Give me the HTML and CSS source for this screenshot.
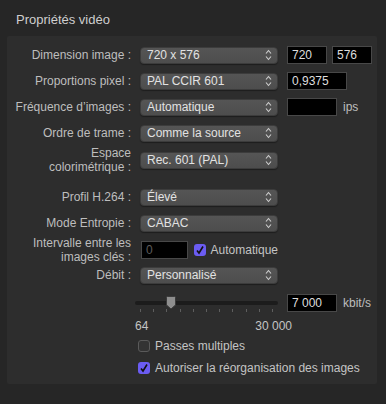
FILE: index.html
```html
<!DOCTYPE html>
<html lang="fr">
<head>
  <meta charset="UTF-8">
  <title>Propriétés vidéo</title>
  <link rel="stylesheet" href="styles.css">
</head>
<body>
  <div class="titre">Propriétés vidéo</div>

  <div class="panneau">
    <div class="ligne">
      <div class="lbl">Dimension image :</div>
      <div class="popup">720 x 576<svg class="chev" viewBox="0 0 7 12"><path d="M1 4.5 L3.5 1.5 L6 4.5 M1 7.5 L3.5 10.5 L6 7.5"/></svg></div>
      <div class="extra"><span class="champ l40">720</span><span class="champ l40">576</span></div>
    </div>

    <div class="ligne">
      <div class="lbl">Proportions pixel :</div>
      <div class="popup">PAL CCIR 601<svg class="chev" viewBox="0 0 7 12"><path d="M1 4.5 L3.5 1.5 L6 4.5 M1 7.5 L3.5 10.5 L6 7.5"/></svg></div>
      <div class="extra"><span class="champ l60">0,9375</span></div>
    </div>

    <div class="ligne">
      <div class="lbl">Fréquence d’images :</div>
      <div class="popup">Automatique<svg class="chev" viewBox="0 0 7 12"><path d="M1 4.5 L3.5 1.5 L6 4.5 M1 7.5 L3.5 10.5 L6 7.5"/></svg></div>
      <div class="extra"><span class="champ l50"></span><span class="unite">ips</span></div>
    </div>

    <div class="ligne">
      <div class="lbl">Ordre de trame :</div>
      <div class="popup">Comme la source<svg class="chev" viewBox="0 0 7 12"><path d="M1 4.5 L3.5 1.5 L6 4.5 M1 7.5 L3.5 10.5 L6 7.5"/></svg></div>
    </div>

    <div class="ligne">
      <div class="lbl deux">Espace<br>colorimétrique :</div>
      <div class="popup">Rec. 601 (PAL)<svg class="chev" viewBox="0 0 7 12"><path d="M1 4.5 L3.5 1.5 L6 4.5 M1 7.5 L3.5 10.5 L6 7.5"/></svg></div>
    </div>

    <div class="ligne espace-avant">
      <div class="lbl">Profil H.264 :</div>
      <div class="popup">Élevé<svg class="chev" viewBox="0 0 7 12"><path d="M1 4.5 L3.5 1.5 L6 4.5 M1 7.5 L3.5 10.5 L6 7.5"/></svg></div>
    </div>

    <div class="ligne">
      <div class="lbl">Mode Entropie :</div>
      <div class="popup">CABAC<svg class="chev" viewBox="0 0 7 12"><path d="M1 4.5 L3.5 1.5 L6 4.5 M1 7.5 L3.5 10.5 L6 7.5"/></svg></div>
    </div>

    <div class="ligne">
      <div class="lbl deux">Intervalle entre les<br>images clés :</div>
      <div class="combo">
        <span class="champ l48 grise">0</span>
        <span class="case cochee"><svg viewBox="0 0 12 12"><path d="M3 6.5 L5 9 L9 2.5"/></svg></span>
        <span class="txt">Automatique</span>
      </div>
    </div>

    <div class="ligne">
      <div class="lbl">Débit :</div>
      <div class="popup">Personnalisé<svg class="chev" viewBox="0 0 7 12"><path d="M1 4.5 L3.5 1.5 L6 4.5 M1 7.5 L3.5 10.5 L6 7.5"/></svg></div>
    </div>

    <div class="ligne curseur-ligne">
      <div></div>
      <div class="curseur">
        <div class="piste"></div>
        <div class="graduations">
          <i></i><i></i><i></i><i></i><i></i><i></i><i></i><i></i><i></i><i></i><i></i>
        </div>
        <svg class="bouton" viewBox="0 0 12 14"><path d="M1.5 1.5 Q1.5 0.5 2.5 0.5 L9.5 0.5 Q10.5 0.5 10.5 1.5 L10.5 9 L6 13 L1.5 9 Z"/></svg>
      </div>
      <div class="extra"><span class="champ l50">7 000</span><span class="unite">kbit/s</span></div>
    </div>

    <div class="bornes">
      <span>64</span><span>30 000</span>
    </div>

    <div class="option">
      <span class="case"></span><span class="txt">Passes multiples</span>
    </div>
    <div class="option">
      <span class="case cochee"><svg viewBox="0 0 12 12"><path d="M3 6.5 L5 9 L9 2.5"/></svg></span><span class="txt">Autoriser la réorganisation des images</span>
    </div>
  </div>
</body>
</html>
```

FILE: styles.css
```css
body {
  margin: 0;
  background-color: #262626;
  font-family: "Liberation Sans", Arial, sans-serif;
  font-size: 12px;
  color: #bdbdbd;
  width: 386px;
  height: 404px;
  overflow: hidden;
}

.titre {
  height: 36px;
  line-height: 40px;
  padding-left: 16px;
  font-size: 13px;
  color: #cfcfcf;
  box-sizing: border-box;
}

.panneau {
  margin: 0 9px 0 7px;
  height: 348px;
  background-color: #2d2d2d;
  border-radius: 2px;
  padding-top: 6px;
  box-sizing: border-box;
}

.ligne {
  display: grid;
  grid-template-columns: 124px 138px auto;
  column-gap: 9px;
  align-items: center;
  height: 26px;
}

.espace-avant {
  margin-top: 12px;
}

.lbl {
  text-align: right;
  white-space: nowrap;
  color: #bebebe;
}

.lbl.deux {
  line-height: 14px;
}

.popup {
  height: 17px;
  box-sizing: border-box;
  border-radius: 4px;
  background: linear-gradient(#555555, #4d4d4d);
  border: 1px solid #3c3c3c;
  box-shadow: 0 1px 1px rgba(0, 0, 0, 0.35);
  color: #e2e2e2;
  padding: 0 5px 0 6px;
  line-height: 15px;
  display: flex;
  justify-content: space-between;
  align-items: center;
}

.chev {
  width: 7px;
  height: 12px;
  fill: none;
  stroke: #cfcfcf;
  stroke-width: 1.1;
}

.extra {
  display: flex;
  align-items: center;
  gap: 5px;
}

.champ {
  display: inline-block;
  height: 18px;
  box-sizing: border-box;
  background-color: #000;
  border: 1px solid #484848;
  color: #dedede;
  line-height: 16px;
  padding: 0 4px;
}

.l40 { width: 40px; }
.l48 { width: 48px; }
.l50 { width: 50px; }
.l60 { width: 60px; }

.grise {
  color: #5c5c5c;
}

.unite {
  color: #bdbdbd;
  margin-left: 1px;
}

.combo {
  display: flex;
  align-items: center;
  margin-left: 1px;
}

.case {
  display: inline-block;
  width: 12px;
  height: 12px;
  box-sizing: border-box;
  border: 1px solid #5a5a5a;
  background-color: #333;
  border-radius: 3px;
}

.case svg {
  display: block;
  width: 12px;
  height: 12px;
  fill: none;
  stroke: #111;
  stroke-width: 1.6;
}

.case.cochee {
  background-color: #6b5cf2;
  border: none;
}

.combo .case {
  margin-left: 6px;
}

.txt {
  margin-left: 5px;
  color: #c4c4c4;
}

.curseur-ligne {
  height: 28px;
  margin-top: 1px;
}

.curseur {
  position: relative;
  height: 28px;
  margin-left: -5px;
}

.piste {
  position: absolute;
  left: 0;
  right: 0;
  top: 12px;
  height: 4px;
  border-radius: 2px;
  background-color: #1c1c1c;
}

.graduations {
  position: absolute;
  left: 5px;
  right: 5px;
  top: 20px;
  display: flex;
  justify-content: space-between;
}

.graduations i {
  width: 1px;
  height: 3px;
  background-color: #5e5e5e;
}

.bouton {
  position: absolute;
  left: 30px;
  top: 7px;
  width: 12px;
  height: 14px;
  fill: #8e8e8e;
  stroke: #3a3a3a;
  stroke-width: 1;
}

.bornes {
  display: flex;
  justify-content: space-between;
  width: 157px;
  margin-left: 128px;
  height: 18px;
  line-height: 18px;
  color: #c4c4c4;
}

.option {
  display: flex;
  align-items: center;
  height: 22px;
  margin-left: 131px;
}
```
